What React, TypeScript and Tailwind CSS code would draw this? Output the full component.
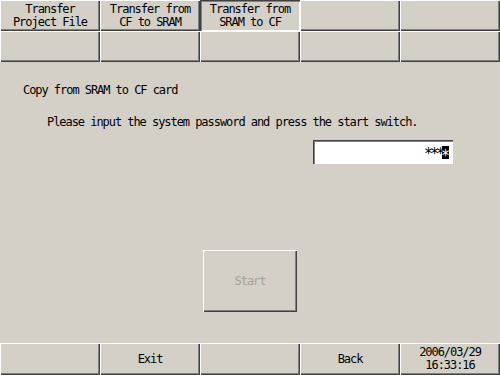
const RAISED =
  "shadow-[inset_1px_1px_0_#ffffff,inset_-1px_-1px_0_#404040,inset_-2px_-2px_0_#808080]";
const SUNKEN =
  "shadow-[inset_1px_1px_0_#404040,inset_2px_2px_0_#808080,inset_-1px_-1px_0_#ffffff]";

const TABS = [
  ["Transfer", "Project File"],
  ["Transfer from", "CF to SRAM"],
  ["Transfer from", "SRAM to CF"],
  [],
  [],
];

function Key({ lines, active }: { lines?: string[]; active?: boolean }) {
  return (
    <div
      className={`h-full flex flex-col items-center justify-center leading-[13px] text-black ${
        active ? SUNKEN : RAISED
      }`}
    >
      {lines?.map((l) => (
        <span key={l}>{l}</span>
      ))}
    </div>
  );
}

export default function App() {
  return (
    <div className="w-[500px] h-[375px] bg-[#d4d0c8] flex flex-col overflow-hidden font-['DejaVu_Sans_Mono',monospace] text-[12px] tracking-[-1.05px] text-black">
      <div className="grid grid-cols-5 grid-rows-[31px_31px]">
        {TABS.map((t, i) => (
          <Key key={i} lines={t} active={i === 2} />
        ))}
        {[0, 1, 2, 3, 4].map((i) => (
          <Key key={"b" + i} />
        ))}
      </div>

      <div className="flex-1 flex flex-col">
        <p className="mt-[21px] pl-[23px] leading-[14px]">Copy from SRAM to CF card</p>
        <p className="mt-[18px] pl-[47px] leading-[14px]">
          Please input the system password and press the start switch.
        </p>
        <div className="mt-[11px] flex justify-end pr-[47px]">
          <div className={`w-[140px] h-[24px] bg-white flex items-center justify-end pr-[4px] ${SUNKEN}`}>
            <span className="text-[15px] leading-[13px] tracking-[-3px] pt-[4px]">***</span>
            <span className="w-[7px] h-[13px] bg-black text-white text-[15px] leading-[13px] tracking-normal pt-[4px] flex justify-center">
              *
            </span>
          </div>
        </div>
        <div
          className={`mt-[86px] mx-auto w-[94px] h-[62px] flex items-center justify-center text-[#a6a29a] ${RAISED}`}
        >
          Start
        </div>
      </div>

      <div className="grid grid-cols-5 h-[32px]">
        <Key />
        <Key lines={["Exit"]} />
        <Key />
        <Key lines={["Back"]} />
        <div className={`h-full flex flex-col items-center justify-center leading-[13px] ${RAISED}`}>
          <span>2006/03/29</span>
          <span>16:33:16</span>
        </div>
      </div>
    </div>
  );
}
